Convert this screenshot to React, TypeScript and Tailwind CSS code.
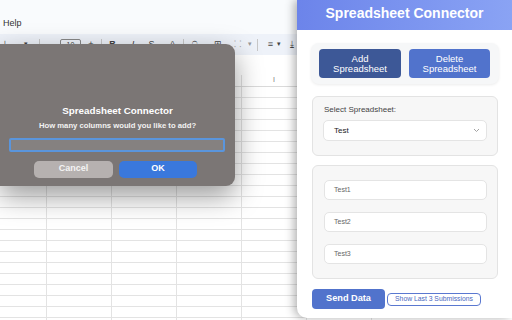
import React from "react";

const cols = [47, 65, 65, 65, 65, 65];
const rows = Array.from({ length: 22 });

const Toolbar = () => (
  <div className="h-[21px] bg-[#eef2f9] flex items-center text-[9px] text-[#444] font-['Liberation_Sans',sans-serif]">
    <span className="ml-[1px] w-[6px] text-center">⊥</span>
    <span className="ml-[16px] w-[6px] text-center text-[7px]">▾</span>
    <span className="ml-[10px] w-px h-[12px] bg-[#c7c7c7]" />
    <span className="ml-[20px] w-[21px] h-[11px] border border-[#888] rounded-[2px] text-[7px] leading-[9px] text-center">10</span>
    <span className="ml-[7px] w-[6px] text-center">+</span>
    <span className="ml-[7px] w-px h-[12px] bg-[#c7c7c7]" />
    <span className="ml-[7px] w-[7px] text-center font-bold">B</span>
    <span className="ml-[14px] w-[6px] text-center italic">I</span>
    <span className="ml-[12px] w-[7px] text-center line-through">S</span>
    <span className="ml-[14px] w-[7px] text-center">A</span>
    <span className="ml-[7px] w-px h-[12px] bg-[#c7c7c7]" />
    <span className="ml-[6px] w-[8px] text-center">⍜</span>
    <span className="ml-[15px] w-[9px] text-center">⊞</span>
    <span className="ml-[11px] w-[8px] text-center text-[#999]">⸬</span>
    <span className="ml-[6px] w-[6px] text-center text-[7px] text-[#999]">▾</span>
    <span className="ml-[4px] w-px h-[12px] bg-[#c7c7c7]" />
    <span className="ml-[8px] w-[9px] text-center">≡</span>
    <span className="ml-[1px] w-[6px] text-center text-[7px]">▾</span>
    <span className="ml-[6px] w-[8px] text-center">⤓</span>
  </div>
);

const Sheet = () => (
  <div className="w-[512px] h-[320px] bg-white font-['Liberation_Sans',sans-serif]">
    <div className="h-[34px] bg-[#f9fbfd] flex items-end pb-[6px] pl-[3px]">
      <span className="text-[9px] text-[#333] leading-none">Help</span>
    </div>
    <Toolbar />
    <div className="h-[20px] bg-white" />
    <div className="flex h-[12px] border-b border-[#dadada]">
      {cols.map((w, i) => (
        <div
          key={i}
          style={{ width: w }}
          className="h-full border-r border-[#e2e2e2] flex items-center justify-center text-[7px] text-[#777]"
        >
          {i === 4 ? "I" : ""}
        </div>
      ))}
    </div>
    {rows.map((_, r) => (
      <div key={r} className="flex h-[11px] border-b border-[#e3e3e3]">
        {cols.map((w, i) => (
          <div key={i} style={{ width: w }} className="h-full border-r border-[#e3e3e3]" />
        ))}
      </div>
    ))}
  </div>
);

const Dialog = () => (
  <div className="absolute left-0 top-[44px] w-[235px] h-[142px] bg-[#7b7675] rounded-r-[9px] shadow-[0_10px_28px_rgba(0,0,0,0.4)] flex flex-col items-center font-['Liberation_Sans',sans-serif]">
    <div className="mt-[62px] text-[9.8px] font-bold text-white leading-none">Spreadsheet Connector</div>
    <div className="mt-[6px] text-[7.7px] font-bold text-[#f2f2f2] leading-none">How many columns would you like to add?</div>
    <div className="mt-[8px] ml-[9px] self-start w-[216px] h-[14px] bg-[#858180] border-2 border-[#5a95dc] rounded-[2px]" />
    <div className="mt-[9px] flex gap-[6px] ml-[-4px]">
      <button className="w-[79px] h-[17px] rounded-[5px] bg-[#b6b1b0] text-[9px] font-bold text-[#f4f4f4]">Cancel</button>
      <button className="w-[78px] h-[17px] rounded-[5px] bg-[#3a78dc] text-[9px] font-bold text-white">OK</button>
    </div>
  </div>
);

const Field = ({ value }: { value: string }) => (
  <div className="ml-[11px] w-[163px] h-[20px] bg-white border border-[#e4e4e4] rounded-[5px] flex items-center pl-[9px] text-[7px] text-[#666]">
    {value}
  </div>
);

const Panel = () => (
  <div className="absolute right-0 top-0 w-[215px] h-[318px] bg-white rounded-bl-[10px] shadow-[-3px_0_10px_rgba(0,0,0,0.3)] font-['Liberation_Sans',sans-serif] overflow-hidden">
    <div className="h-[30px] bg-gradient-to-r from-[#6c84ea] to-[#8aa3f4] flex items-center justify-center">
      <span className="text-[14px] font-bold text-white leading-none -mt-[4px]">Spreadsheet Connector</span>
    </div>
    <div className="mt-[13px] ml-[14px] w-[188px] h-[41px] bg-[#f6f7f8] rounded-[8px] shadow-[0_1px_3px_rgba(0,0,0,0.08)] flex gap-[8px] pt-[6px] pl-[8px]">
      <button className="w-[82px] h-[29px] rounded-[4px] bg-[#3d5897] text-white text-[9.5px] leading-[10px]">
        Add
        <br />
        Spreadsheet
      </button>
      <button className="w-[81px] h-[29px] rounded-[4px] bg-[#5173cc] text-white text-[9.5px] leading-[10px]">
        Delete
        <br />
        Spreadsheet
      </button>
    </div>
    <div className="mt-[12px] ml-[15px] w-[186px] h-[60px] bg-[#f7f7f7] border border-[#e3e3e3] rounded-[6px] flex flex-col">
      <div className="mt-[9px] ml-[11px] text-[8px] text-[#444] leading-none">Select Spreadsheet:</div>
      <div className="mt-[6px] ml-[10px] w-[164px] h-[21px] bg-white border border-[#e4e4e4] rounded-[5px] flex items-center justify-between pl-[10px] pr-[6px]">
        <span className="text-[8px] text-[#222]">Test</span>
        <svg width="7" height="5" viewBox="0 0 7 5">
          <path d="M1 1 L3.5 3.5 L6 1" fill="none" stroke="#999" strokeWidth="0.9" />
        </svg>
      </div>
    </div>
    <div className="mt-[9px] ml-[15px] w-[186px] h-[114px] bg-[#f7f7f7] border border-[#e3e3e3] rounded-[6px] flex flex-col gap-[12px] pt-[14px]">
      <Field value="Test1" />
      <Field value="Test2" />
      <Field value="Test3" />
    </div>
    <div className="mt-[10px] ml-[15px] flex items-center gap-[2px]">
      <button className="w-[73px] h-[20px] rounded-[4px] bg-[#5173cc] text-white text-[9.2px] font-bold">Send Data</button>
      <button className="w-[94px] h-[13px] rounded-[4px] border border-[#5a78d0] bg-white text-[#4a68c0] text-[6.8px] leading-none">
        Show Last 3 Submissions
      </button>
    </div>
  </div>
);

export default function App() {
  return (
    <div className="relative w-[512px] h-[320px] overflow-hidden bg-white">
      <Sheet />
      <Dialog />
      <Panel />
    </div>
  );
}
